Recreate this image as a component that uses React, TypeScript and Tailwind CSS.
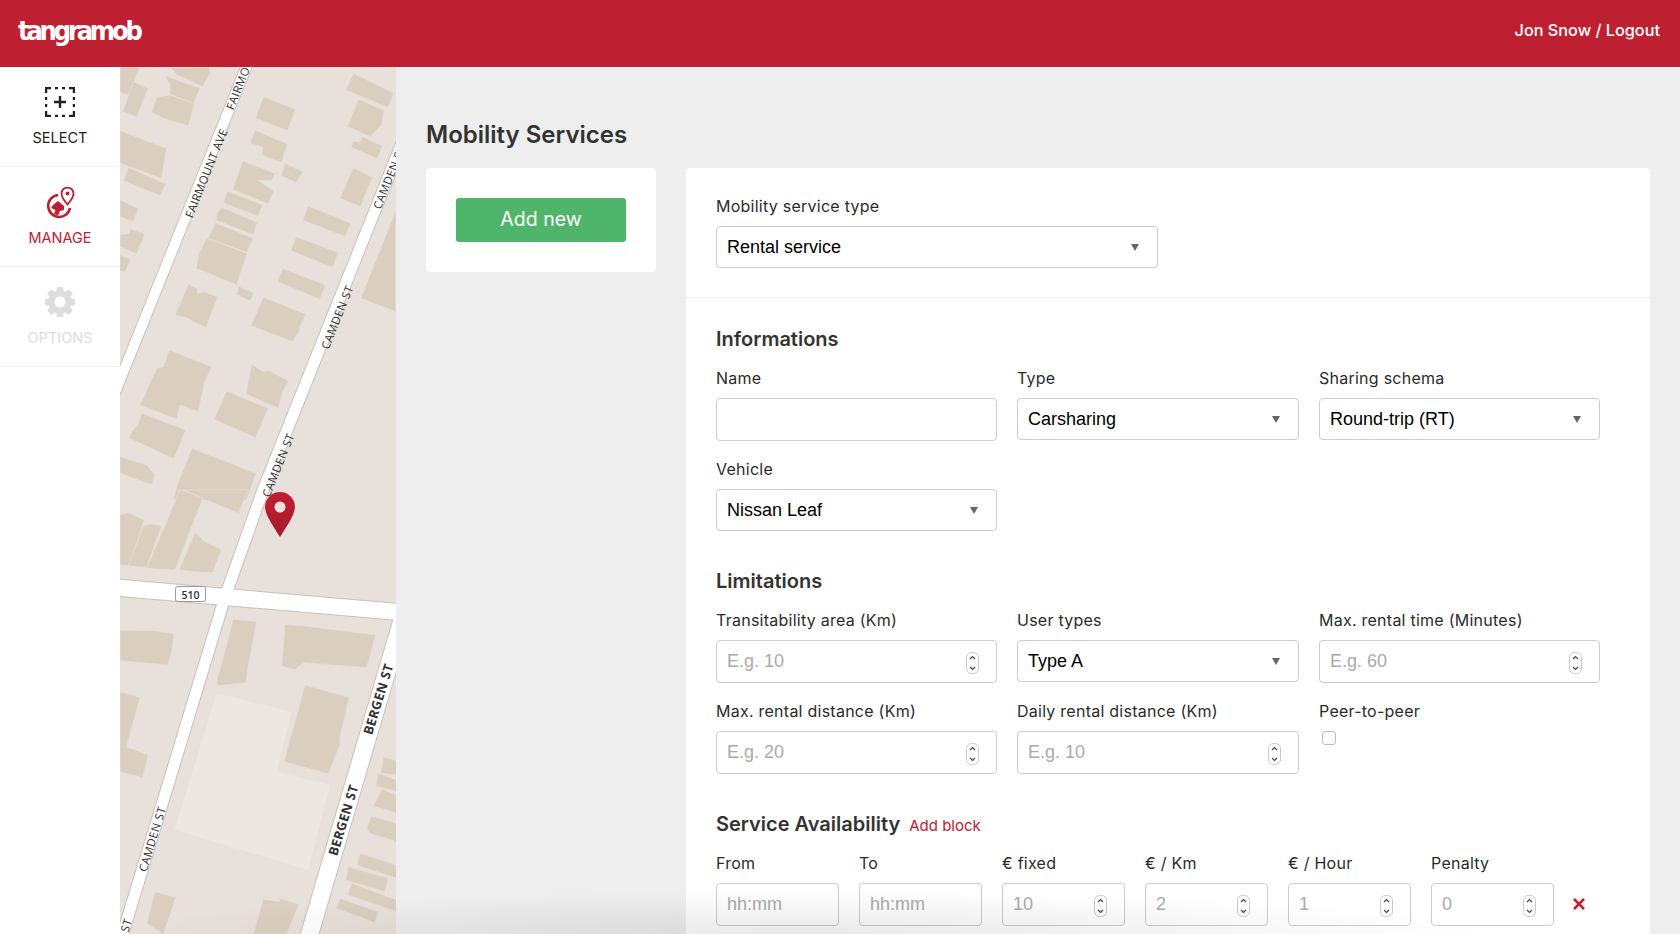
import React from 'react';

const upperBuildings = [
  '0,20 60,20 25,105 0,95', '40,65 85,85 50,172 8,155', '150,22 268,22 270,40 248,80 172,45',
  '135,47 240,85 220,132 150,102 150,75', '110,112 150,105 222,130 205,198 130,175 95,158',
  '430,110 527,148 503,212 407,175', '405,210 502,252 485,308 425,285 428,262 390,250',
  '700,40 822,100 805,143 678,90', '715,118 792,150 785,195 750,230 683,200',
  '728,230 788,258 772,296 693,262 700,245 722,245', '0,212 140,265 133,305 125,355 0,310',
  '25,322 137,372 120,407 10,362', '0,420 55,445 40,485 0,470', '30,505 75,522 50,582 0,560 0,525 28,520',
  '0,585 32,597 15,637 0,632', '368,303 465,340 455,362 412,360 462,393 445,432 338,388',
  '322,393 428,435 415,468 310,430', '305,442 412,487 400,525 288,480 290,462',
  '285,488 400,535 380,578 265,535', '260,535 382,580 350,675 228,625 235,585',
  '495,310 548,335 530,368 483,347', '565,438 693,490 675,530 548,480', '528,530 655,578 638,623 512,572',
  '488,625 617,675 600,718 472,665', '700,323 757,352 722,440 660,415',
  '430,712 557,762 540,800 537,815 517,845 393,797', '828,450 828,755 722,715',
  '205,672 232,685 232,700 255,695 293,712 258,802 222,787 200,773 165,765', '355,678 402,700 390,722 350,705',
  '148,870 275,920 255,965 235,1055 180,1035 170,1078 60,1035 90,970 110,925 130,920',
  '395,912 430,935 445,932 505,962 488,1000 475,1045 378,1003', '320,993 445,1045 407,1133 282,1078',
  '65,1060 197,1110 162,1197 28,1135 35,1115 50,1100', '0,1190 80,1215 105,1245 95,1275 0,1240',
  '215,1165 408,1240 380,1320 160,1320 170,1280',
];

const lowerBuildings = [
  '180,0 250,20 165,240 80,235', '190,0 385,0 355,70 250,25', '0,75 28,68 72,90 30,228 0,225',
  '70,108 95,100 125,108 80,232 25,228', '225,125 250,152 305,178 278,248 222,245 178,240',
  '0,420 98,422 162,430 155,488 143,525 0,512', '340,388 410,395 385,525 378,578 295,587 290,575',
  '495,403 555,408 768,435 740,533 550,518 525,540 485,528', '555,585 688,622 660,740 660,765 625,852 492,815',
  '0,605 60,622 20,770 85,795 68,863 0,845', '105,1205 168,1222 130,1332 80,1300',
  '430,1228 478,1235 480,1225 537,1243 500,1332 400,1332', '790,800 830,812 830,855 782,850',
  '775,850 830,870 830,905 767,888', '785,898 830,915 830,970 760,948', '755,978 830,1000 830,1055 750,1030 740,1015',
  '720,1090 830,1125 830,1165 710,1125', '685,1130 805,1165 795,1205 677,1170', '695,1180 830,1230 830,1265 683,1215',
  '660,1225 775,1265 765,1298 648,1255',
];

const roads = [
  { points: '260,33 120,380 100,430', width: 10 },
  { points: '412,118 263,490 225,597 123,933 118,950', width: 11 },
  { points: '110,587 410,613', width: 16 },
  { points: '408,600 310,933 302,960', width: 17 },
];

const mapLabels = [
  { text: 'FAIRMOUNT AVE', x: 206, y: 173, angle: -68, bold: false },
  { text: 'FAIRMOUNT AVE', x: 247, y: 65, angle: -68, bold: false },
  { text: 'CAMDEN ST', x: 337, y: 317, angle: -68, bold: false },
  { text: 'CAMDEN ST', x: 389, y: 177, angle: -68, bold: false },
  { text: 'CAMDEN ST', x: 278, y: 465, angle: -68, bold: false },
  { text: 'CAMDEN ST', x: 152, y: 839, angle: -73, bold: false },
  { text: 'CAMDEN ST', x: 118, y: 951, angle: -73, bold: false },
  { text: 'BERGEN ST', x: 378, y: 699, angle: -73, bold: true },
  { text: 'BERGEN ST', x: 343, y: 820, angle: -73, bold: true },
];

function MapView() {
  return (
    <svg viewBox="120 67 276 867" className="block h-full w-full font-['Open_Sans',sans-serif]">
      <rect x="120" y="67" width="276" height="867" fill="#e8e0da" />
      <g transform="translate(120,490) scale(0.3333)">
        <polygon points="290,610 515,665 470,845 630,885 565,1140 163,1020" fill="#ece7e1" />
      </g>
      <g transform="translate(120,60) scale(0.3333)" fill="#dacebf" stroke="#e8e0da" strokeWidth="2">
        {upperBuildings.map((points) => (
          <polygon key={points} points={points} />
        ))}
      </g>
      <g transform="translate(120,490) scale(0.3333)" fill="#dacebf" stroke="#e8e0da" strokeWidth="2">
        {lowerBuildings.map((points) => (
          <polygon key={points} points={points} />
        ))}
      </g>
      {roads.map((road) => (
        <polyline key={road.points} points={road.points} fill="none" stroke="#c8c1b8" strokeWidth={road.width + 2} />
      ))}
      {roads.map((road) => (
        <polyline key={road.points} points={road.points} fill="none" stroke="#ffffff" strokeWidth={road.width} />
      ))}
      {mapLabels.map((label) => (
        <text
          key={label.x}
          transform={`translate(${label.x},${label.y}) rotate(${label.angle})`}
          textAnchor="middle"
          dominantBaseline="central"
          fontSize={label.bold ? 13 : 11.5}
          fontWeight={label.bold ? 700 : 400}
          letterSpacing="0.4"
          fill="#333333"
        >
          {label.text}
        </text>
      ))}
      <rect x="175.5" y="586.5" width="30" height="15" rx="2" fill="#ffffff" stroke="#9a9a9a" />
      <text x="190.5" y="594.5" textAnchor="middle" dominantBaseline="central" fontSize="10.5" fontWeight="600" fill="#333333">
        510
      </text>
      <defs>
        <linearGradient id="pin" x1="0" y1="0" x2="0" y2="1">
          <stop offset="0" stopColor="#c21f31" />
          <stop offset="1" stopColor="#a51b2b" />
        </linearGradient>
      </defs>
      <path d="M280 492a15 15 0 0 1 15 15c0 8-10 22-15 30-5-8-15-22-15-30a15 15 0 0 1 15-15z" fill="url(#pin)" />
      <circle cx="280" cy="507" r="5.5" fill="#e9e1db" />
    </svg>
  );
}

function SelectIcon() {
  return (
    <svg width="30" height="30" viewBox="0 0 30 30" fill="none" stroke="#222222" strokeWidth="2.4">
      <path d="M1 6V1h5M24 1h5v5M29 24v5h-5M6 29H1v-5" />
      <path d="M10 1h3M17 1h3M10 29h3M17 29h3M1 10v3M1 17v3M29 10v3M29 17v3" />
      <path d="M15 9v12M9 15h12" />
    </svg>
  );
}

function ManageIcon() {
  return (
    <svg width="30" height="32" viewBox="0 1 30 32" fill="#be2032">
      <path d="M13 9a11 11 0 1 0 12 13" fill="none" stroke="#be2032" strokeWidth="2.6" />
      <polygon points="8,19 13,15 19,20 19,24 15,25 13,29.5 9,28 10.5,24 6,22" />
      <path
        d="M22.5 1.5a6 6 0 0 1 6 6c0 4-6 11-6 11s-6-7-6-11a6 6 0 0 1 6-6z"
        fill="#ffffff"
        stroke="#be2032"
        strokeWidth="1.8"
      />
      <circle cx="22.5" cy="7.5" r="2" />
    </svg>
  );
}

function GearIcon() {
  return (
    <svg width="30" height="30" viewBox="0 0 30 30" fill="#dddddd">
      {[0, 45, 90, 135, 180, 225, 270, 315].map((angle) => (
        <rect key={angle} x="11.5" y="0" width="7" height="8" rx="1.5" transform={`rotate(${angle} 15 15)`} />
      ))}
      <circle cx="15" cy="15" r="11.5" />
      <circle cx="15" cy="15" r="5.5" fill="#ffffff" />
    </svg>
  );
}

const navItems = [
  { label: 'SELECT', icon: <SelectIcon />, color: 'text-[#222222]' },
  { label: 'MANAGE', icon: <ManageIcon />, color: 'text-[#be2032]' },
  { label: 'OPTIONS', icon: <GearIcon />, color: 'text-[#dddddd]' },
];

function Sidebar() {
  return (
    <div className="w-[120px] shrink-0 bg-white">
      {navItems.map((item) => (
        <div key={item.label} className="flex h-[100px] flex-col items-center border-b border-[#eeeeee] pt-[20px]">
          <div className="flex h-[32px] items-start justify-center">{item.icon}</div>
          <div className={`mt-[10px] text-[14.5px] leading-[18px] ${item.color}`}>{item.label}</div>
        </div>
      ))}
    </div>
  );
}

function Caret() {
  return (
    <svg width="8" height="7" viewBox="0 0 8 7" className="shrink-0">
      <polygon points="0,0 8,0 4,7" fill="#666666" />
    </svg>
  );
}

function Stepper() {
  return (
    <svg width="13" height="22" viewBox="0 0 13 22" fill="none" className="mt-[2px] shrink-0">
      <rect x="0.5" y="0.5" width="12" height="21" rx="5" fill="#ffffff" stroke="#c9c9c9" />
      <path d="M4 7l2.5-2.5L9 7M4 15l2.5 2.5L9 15" stroke="#444444" strokeWidth="1.1" />
    </svg>
  );
}

function Field({ label, children }: { label: string; children?: React.ReactNode }) {
  return (
    <div>
      <div className="mb-[10px] h-[20px] text-[16px] leading-[20px] tracking-[0.25px] whitespace-nowrap text-[#2b2b2b]">
        {label}
      </div>
      {children}
    </div>
  );
}

function SelectBox({ value, className = '' }: { value: string; className?: string }) {
  return (
    <div
      className={`flex h-[42px] items-center justify-between rounded-[4px] border border-[#cccccc] bg-white pr-[18px] pl-[10px] font-['Liberation_Sans',sans-serif] text-[18px] text-black ${className}`}
    >
      {value}
      <Caret />
    </div>
  );
}

function TextInput({ placeholder, stepper = false }: { placeholder?: string; stepper?: boolean }) {
  return (
    <div className="flex h-[43px] items-center rounded-[4px] border border-[#cccccc] bg-white pr-[17px] pl-[10px] font-['Liberation_Sans',sans-serif] text-[18px]">
      <input placeholder={placeholder} className="w-full min-w-0 flex-1 bg-transparent outline-none placeholder:text-[#aaaaaa]" />
      {stepper && <Stepper />}
    </div>
  );
}

function SectionTitle({ children }: { children: React.ReactNode }) {
  return <h3 className="mb-[17px] h-[24px] text-[20px] leading-[24px] font-semibold text-[#333333]">{children}</h3>;
}

const availability = [
  { label: 'From', placeholder: 'hh:mm', stepper: false },
  { label: 'To', placeholder: 'hh:mm', stepper: false },
  { label: '€ fixed', placeholder: '10', stepper: true },
  { label: '€ / Km', placeholder: '2', stepper: true },
  { label: '€ / Hour', placeholder: '1', stepper: true },
  { label: 'Penalty', placeholder: '0', stepper: true },
];

export default function App() {
  return (
    <div className="relative flex h-[934px] flex-col overflow-hidden bg-[#eeeeee] font-['Inter',sans-serif]">
      <header className="flex h-[67px] shrink-0 items-center justify-between bg-[#be2032] pr-[20px] pb-[6px] pl-[18px] text-white">
        <div className="font-['DejaVu_Sans_Condensed','DejaVu_Sans',sans-serif] text-[27px] leading-none font-bold tracking-[-3.2px] [font-stretch:condensed]">
          tangramob
        </div>
        <div className="text-[16.25px] font-medium">Jon Snow / Logout</div>
      </header>

      <div className="flex min-h-0 flex-1">
        <Sidebar />
        <div className="w-[276px] shrink-0">
          <MapView />
        </div>

        <main className="min-w-0 flex-1 px-[30px]">
          <h2 className="mt-[51px] mb-[17px] h-[33px] text-[24px] leading-[33px] font-semibold text-[#333333]">
            Mobility Services
          </h2>
          <div className="flex items-start gap-[30px]">
            <div className="w-[230px] shrink-0 rounded-[4px] bg-white p-[30px]">
              <button className="h-[44px] w-full rounded-[3px] bg-[#4fb56a] text-[19.5px] text-white">Add new</button>
            </div>

            <div className="h-[800px] min-w-0 flex-1 rounded-[4px] bg-white">
              <div className="h-[130px] border-b border-[#eeeeee] px-[30px] pt-[28px]">
                <Field label="Mobility service type">
                  <SelectBox value="Rental service" className="w-[442px]" />
                </Field>
              </div>

              <div className="w-[914px] pt-[29px] pl-[30px]">
                <SectionTitle>Informations</SectionTitle>
                <div className="grid grid-cols-[281px_282px_281px] gap-x-[20px] gap-y-[18px]">
                  <Field label="Name">
                    <TextInput />
                  </Field>
                  <Field label="Type">
                    <SelectBox value="Carsharing" />
                  </Field>
                  <Field label="Sharing schema">
                    <SelectBox value="Round-trip (RT)" />
                  </Field>
                  <Field label="Vehicle">
                    <SelectBox value="Nissan Leaf" />
                  </Field>
                </div>

                <div className="mt-[38px]">
                  <SectionTitle>Limitations</SectionTitle>
                </div>
                <div className="grid grid-cols-[281px_282px_281px] gap-x-[20px] gap-y-[18px]">
                  <Field label="Transitability area (Km)">
                    <TextInput placeholder="E.g. 10" stepper />
                  </Field>
                  <Field label="User types">
                    <SelectBox value="Type A" />
                  </Field>
                  <Field label="Max. rental time (Minutes)">
                    <TextInput placeholder="E.g. 60" stepper />
                  </Field>
                  <Field label="Max. rental distance (Km)">
                    <TextInput placeholder="E.g. 20" stepper />
                  </Field>
                  <Field label="Daily rental distance (Km)">
                    <TextInput placeholder="E.g. 10" stepper />
                  </Field>
                  <Field label="Peer-to-peer">
                    <div className="ml-[3px] h-[14px] w-[14px] rounded-[3px] border border-[#bbbbbb] bg-white" />
                  </Field>
                </div>

                <div className="mt-[38px] flex items-baseline gap-[9px]">
                  <SectionTitle>Service Availability</SectionTitle>
                  <span className="text-[15px] text-[#be2032]">Add block</span>
                </div>
                <div className="flex w-[900px] items-end">
                  <div className="grid w-[838px] shrink-0 grid-cols-6 gap-x-[20px]">
                    {availability.map((field) => (
                      <Field key={field.label} label={field.label}>
                        <TextInput placeholder={field.placeholder} stepper={field.stepper} />
                      </Field>
                    ))}
                  </div>
                  <svg width="12" height="12" viewBox="0 0 12 12" className="mb-[16px] ml-[19px] shrink-0">
                    <path d="M1 1l10 10M11 1L1 11" stroke="#be2032" strokeWidth="2.6" />
                  </svg>
                </div>
              </div>
            </div>
          </div>
        </main>
      </div>

      {/* shadow that fades the bottom of the window */}
      <div className="pointer-events-none absolute bottom-0 left-[100px] h-[44px] w-[1400px] bg-[radial-gradient(ellipse_at_bottom,rgba(0,0,0,0.09),transparent_70%)]" />
    </div>
  );
}
